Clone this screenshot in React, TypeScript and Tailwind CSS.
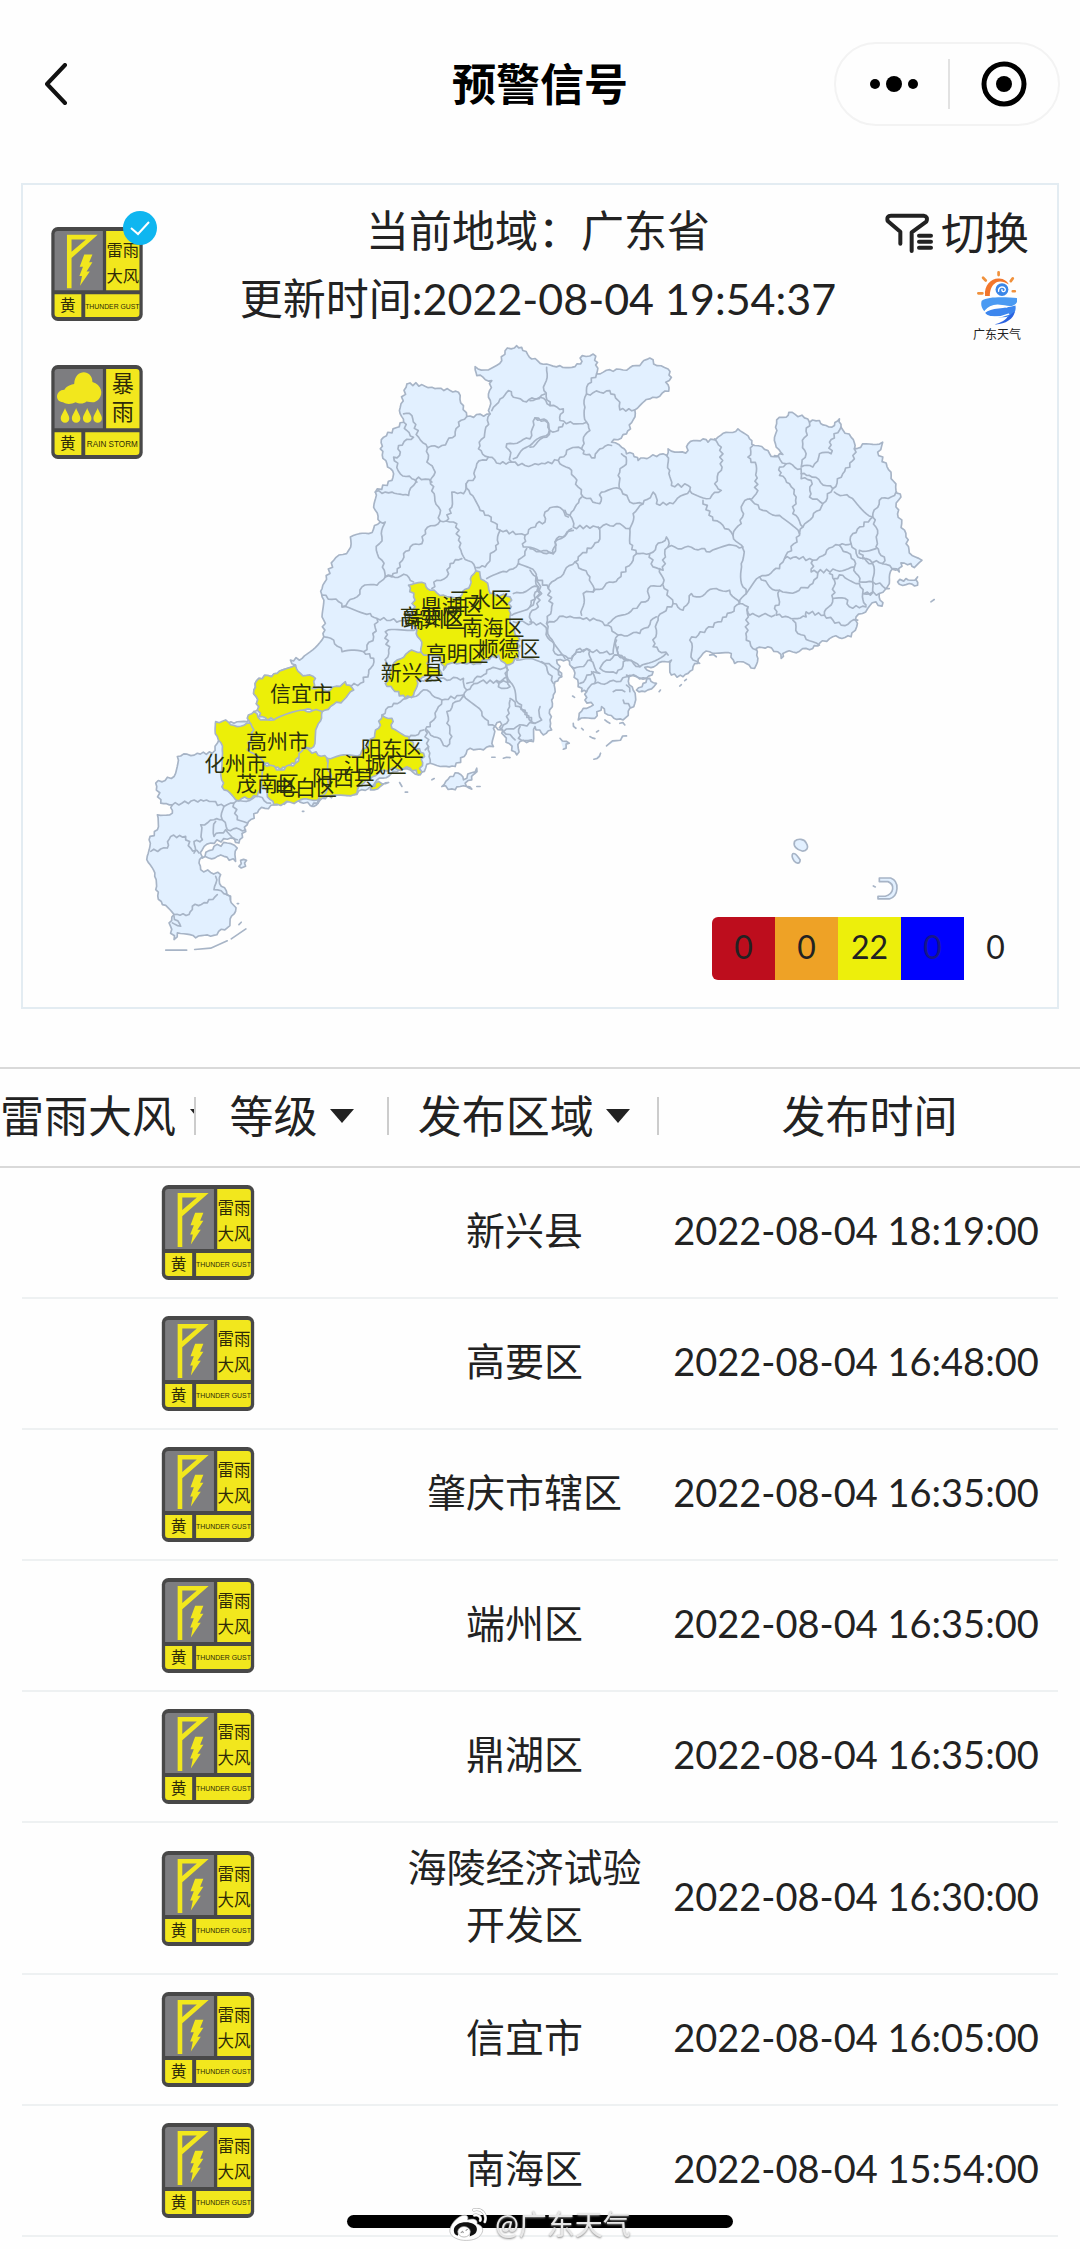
import React from 'react';

type Region = { name: string; x: number; y: number };
type Warning = { area: string; time: string };

const warnings: Warning[] = [
  { area: '新兴县', time: '2022-08-04 18:19:00' },
  { area: '高要区', time: '2022-08-04 16:48:00' },
  { area: '肇庆市辖区', time: '2022-08-04 16:35:00' },
  { area: '端州区', time: '2022-08-04 16:35:00' },
  { area: '鼎湖区', time: '2022-08-04 16:35:00' },
  { area: '海陵经济试验开发区', time: '2022-08-04 16:30:00' },
  { area: '信宜市', time: '2022-08-04 16:05:00' },
  { area: '南海区', time: '2022-08-04 15:54:00' },
];

const levels = [
  { label: '红色', count: 0, style: 'bg-[#bd0d1d] rounded-l-md' },
  { label: '橙色', count: 0, style: 'bg-[#eea226]' },
  { label: '黄色', count: 22, style: 'bg-[#edef0b]' },
  { label: '蓝色', count: 0, style: 'bg-[#0000fe] text-[#17178a]' },
  { label: '白色', count: 0, style: 'bg-[#fefefe]' },
];

const labels: Region[] = [
  { name: '三水区', x: 480, y: 599 },
  { name: '鼎湖区', x: 452, y: 606 },
  { name: '高要区', x: 431, y: 616 },
  { name: '端州区', x: 434, y: 619 },
  { name: '南海区', x: 493, y: 627 },
  { name: '高明区', x: 457, y: 653 },
  { name: '顺德区', x: 509, y: 648 },
  { name: '新兴县', x: 412, y: 672 },
  { name: '信宜市', x: 301, y: 693 },
  { name: '高州市', x: 277, y: 741 },
  { name: '阳东区', x: 392, y: 748 },
  { name: '江城区', x: 375, y: 764 },
  { name: '化州市', x: 235, y: 763 },
  { name: '阳西县', x: 343, y: 777 },
  { name: '茂南区', x: 267, y: 783 },
  { name: '电白区', x: 305, y: 787 },
];

const coast =
  '830,160 875,162 905,170 960,180 985,185 1000,225 1010,258 1080,250 1075,190 1085,150 1040,135 1035,108 1065,118 1115,90 1125,60 1160,45 1175,50 1205,85 1250,100 1290,105 1335,108 1352,100 1357,75 1390,70 1403,95 1400,130 1440,117 1480,118 1530,105 1560,82 1582,105 1615,115 1625,140 1608,155 1617,182 1560,205 1515,238 1510,268 1490,310 1445,335 1475,350 1490,370 1510,370 1525,390 1560,380 1600,370 1612,375 1615,355 1668,368 1675,340 1720,325 1735,335 1765,320 1825,295 1860,325 1875,345 1915,360 1925,378 1960,372 1940,350 1938,290 1950,260 1970,260 1978,245 2025,262 2040,275 2070,270 2090,285 2115,285 2130,265 2135,290 2165,320 2175,355 2210,340 2260,335 2245,365 2285,425 2300,480 2315,500 2300,530 2330,620 2340,668 2378,690 2355,712 2345,700 2315,698 2310,725 2290,715 2280,760 2250,790 2258,828 2240,815 2215,835 2180,860 2182,890 2165,920 2110,920 2070,940 2050,955 1960,970 1955,985 1945,965 1915,950 1880,955 1885,985 1875,1015 1850,1000 1815,1000 1805,970 1740,965 1720,970 1705,1000 1690,1010 1675,1030 1660,1040 1625,1035 1625,990 1580,1005 1545,1012 1570,1025 1550,1045 1490,1035 1510,1080 1515,1120 1480,1170 1435,1155 1415,1130 1395,1165 1345,1170 1360,1135 1390,1125 1365,1110 1370,1085 1355,1085 1345,1060 1325,1010 1312,988 1280,990 1295,1040 1275,1055 1270,1095 1265,1110 1260,1170 1265,1200 1240,1215 1215,1190 1210,1235 1170,1235 1160,1275 1115,1210 1110,1175 1090,1195 1090,1250 1060,1260 1020,1255 975,1310 930,1310 900,1300 865,1335 840,1320 800,1325 740,1350 720,1370 670,1395 620,1395 575,1405 550,1430 500,1410 440,1425 385,1440 350,1485 325,1540 300,1525 240,1540 215,1560 205,1600 210,1620 270,1635 272,1670 300,1700 315,1745 290,1795 240,1820 195,1825 140,1810 130,1830 115,1780 130,1755 95,1725 75,1680 72,1640 48,1590 55,1530 80,1500 80,1455 125,1450 125,1425 90,1420 75,1360 130,1340 140,1280 200,1270 245,1270 260,1240 270,1200 255,1180 310,1180 350,1175 370,1145 385,1130 370,1080 385,1045 440,1030 495,1005 480,990 515,985 580,920 580,870 575,800 575,775 610,690 655,660 660,620 715,610 750,575 735,540 735,485 785,450 790,430 770,400 750,355 760,320 820,275 810,230 830,160';

const northWest = [
  '820,250 845,255 865,320 892,352 935,345 975,315 985,275 1010,258',
  '892,352 890,395 915,425 900,450 912,490 925,530 930,572',
  '820,275 830,300 850,320 805,345 808,375 790,380 810,430 845,445 860,455',
  '735,485 765,485 785,485 800,490 835,495 850,465 865,440 905,455',
  '1080,250 1065,300 1045,355 1075,380 1110,400 1145,395 1130,340 1200,325 1215,262 1250,270 1255,310 1200,345 1150,385',
  '1085,240 1110,205 1135,180 1150,200 1180,212 1215,205 1245,190',
  '1145,395 1185,405 1215,400 1245,400 1285,390',
  '1075,380 1040,400 1035,440 1008,460 1020,490 1050,540 1075,555 1110,600 1105,640 1080,680 1065,710 1040,712',
  '1008,460 1000,490 965,485 965,530 948,572 930,572',
  '948,572 980,580 985,630 995,670 1035,712',
  '930,572 885,600 875,640 840,650 820,670 810,710 785,740 765,740 755,690 738,660 755,620 765,575 750,575',
  '765,740 740,765 695,770 680,800 635,830 625,815 575,795',
  '635,830 720,850 740,865 730,920 700,965 635,965 610,930 580,920',
  '740,865 830,875 860,880',
  '765,740 830,735 850,755',
  '905,775 920,750 950,740 960,700 995,685',
  '1110,600 1185,615 1220,580 1245,575 1245,545 1270,530 1300,540 1315,560',
  '1185,615 1180,650 1250,670 1270,670 1275,635 1325,595',
  '1190,655 1165,700 1130,725 1070,745',
  '1165,700 1215,725 1225,770 1150,790',
  '1225,770 1200,830 1145,855',
  '1150,875 1205,880 1200,850 1225,830 1225,770',
  '700,965 730,985 715,1030 690,1060 645,1070',
  '860,895 765,905 775,960 765,1010 800,1010',
];

const east = [
  '50,110 42,180 60,225 100,235 90,270 130,280 170,275',
  '0,210 30,200 60,225',
  '100,280 85,300 60,300 45,270 15,262',
  '60,300 50,320 0,350',
  '200,130 175,160 170,190 165,230 170,275 180,300 160,330 155,355 160,370 195,382 210,355 245,345',
  '170,190 240,180 270,215 270,238 315,238',
  '155,355 120,355 85,390 125,420 145,470 160,500 210,520 215,485 270,475',
  '275,370 290,390 265,435 275,480 300,515 340,520 370,485 380,520 430,520 480,480',
  '410,375 420,420 425,465 475,465 480,480 530,505 575,480 555,460 575,420 575,350 555,325',
  '520,510 550,570 580,585 610,615',
  '670,345 655,380 680,405 680,490 640,520 635,580 610,615 640,655 635,700 640,770 650,790',
  '660,505 700,540 750,555 810,610',
  '735,375 770,400 750,410 750,435 780,460 800,500 790,550 820,590 810,615 765,685 750,715 690,740 650,790',
  '770,400 815,415 815,445 845,450 840,500 880,520 850,560 820,590',
  '840,275 820,340 830,370 815,410 850,410 870,370 905,370 900,335 935,290',
  '815,430 840,435 910,475 880,520',
  '910,475 940,430 975,385 975,355',
  '915,485 960,500 1030,560 1050,510 1085,500 1100,485',
  '1030,560 970,610 965,640 930,645 910,650 870,680 850,690 800,680 765,685',
  '1030,560 1045,610 1040,650 1065,680 1060,700 1100,720',
  '1040,655 990,660 1000,685 1060,700',
  '930,645 975,690 975,710 920,720 845,725 850,690',
  '690,740 720,770 750,780 800,785 850,760 865,730',
  '750,780 750,815 735,835 740,855 795,865 830,860 830,845 885,855 910,805 915,750 900,730',
  '735,855 660,855 655,830 630,820 650,790',
  '790,870 805,910 850,935 870,945',
  '885,855 935,885 985,870',
  '910,805 955,810 960,830 1010,830',
  '915,745 940,735 990,760 1000,790 1010,825',
  '975,710 990,755 1030,755 1030,785 1000,790',
  '965,640 985,680 1030,700 1030,755 1080,775',
  '1005,790 1050,790',
  '155,500 120,555 130,590 200,590 270,580 300,595 310,550 340,520',
  '120,555 105,540',
  '300,595 300,640 320,670 360,670 410,620 415,650 525,655 540,665 610,645 640,650',
  '205,590 205,635 145,680 135,695 75,750 55,775 65,830 50,880',
  '0,655 70,670 80,625 130,600',
  '135,695 180,740 190,785 265,745 310,690 320,670',
  '190,785 160,790 155,855',
  '360,670 370,710 400,720 405,670 415,650',
  '390,715 400,760 355,775 355,810 310,835 235,880',
  '400,765 430,820 460,840 485,790 500,800 560,775 600,780 630,820',
  '430,820 385,860 380,900 370,950 415,975',
  '50,880 100,858 200,870 235,885 265,915 330,910 380,860',
  '50,880 75,970 115,985 160,960 250,970 265,915',
  '265,950 270,980 330,1010',
  '630,820 590,860 480,930 490,990 510,1000',
  '655,830 650,930 680,960',
  '0,720 20,740 55,775',
  '20,740 35,790 0,830',
  '0,875 40,885 60,930 105,985',
];

const southWest = [
  '870,120 1000,115 1010,150 1050,125 1140,125 1130,80',
  '755,225 790,190 830,175 890,150 935,180 920,210 900,260 885,270 895,320 885,330',
  '835,295 880,270',
  '895,320 900,370',
  '935,180 1000,165 1055,215 1075,255 1115,270',
  '1000,165 950,215 950,250 965,290 950,320 890,270',
  '1140,125 1165,190 1205,245',
  '1140,180 1130,250 1115,265',
  '1130,80 1070,90 1060,105 1010,130',
  '1010,150 1000,170',
  '125,495 210,480 245,485 280,500 310,490 385,470 420,490',
  '280,500 275,540 290,570 345,570',
  '215,600 210,555 250,540 275,540',
  '255,545 250,590 285,570 320,600',
  '60,635 110,625 120,590 165,590 180,625 205,640',
  '190,640 190,605 215,600',
  '310,490 320,540 350,550',
  '130,825 175,825 185,800 230,790 260,765',
  '255,710 250,750 290,765 300,780',
  '130,830 150,860 125,850',
];

const delta = [
  '50,125 80,110 90,140 55,140 50,125',
  '80,70 80,110',
  '90,175 130,215 165,250',
  '110,60 150,55 200,80 220,130',
  '185,65 225,85 245,110',
  '275,60 290,30 330,30 335,60 300,80 275,80',
  '330,60 360,100 340,95 300,130',
  '360,85 410,100 440,60 415,45 380,60 360,85',
  '320,155 345,130 410,125 440,110 500,115',
  '335,95 345,130',
  '415,45 480,80 560,40',
  '410,0 415,45',
  '105,300 70,275 110,260 160,250',
  '120,260 115,295 155,300',
  '180,200 185,240 165,250',
];

const alertAreas = [
  '385,1045 440,1030 495,1005 510,1030 555,1045 545,1075 600,1080 645,1055 670,1080 640,1110 600,1130 575,1145 520,1140 430,1170 385,1160 385,1130 370,1080 385,1045',
  '370,1145 390,1170 430,1170 520,1140 575,1145 560,1190 550,1250 520,1255 495,1300 450,1320 400,1300 350,1260 360,1200 350,1165 370,1145',
  '255,1175 285,1170 320,1190 360,1180 370,1200 350,1260 400,1300 400,1370 380,1400 315,1410 280,1380 270,1330 275,1260 260,1220 255,1175',
  '400,1300 450,1320 495,1300 520,1255 590,1285 600,1330 600,1400 500,1415 430,1425 410,1390 395,1370 400,1300',
  '590,1285 690,1275 745,1195 755,1155 785,1165 785,1195 835,1220 850,1250 880,1270 870,1335 840,1315 760,1320 700,1360 670,1395 575,1405 545,1430 590,1380 600,1330 590,1285',
  '720,1380 735,1360 775,1358 750,1370 720,1380',
  '800,990 835,965 900,960 890,1000 935,1030 860,1050 850,1095 825,1105 765,1060 800,990',
  '835,765 885,760 900,780 940,795 990,800 1020,765 1035,712 1050,735 1075,770 1080,790 1140,800 1140,880 1165,920 1165,985 1130,1005 1105,975 1040,1000 960,1000 940,1020 930,980 880,975 860,900 830,870 850,850 850,800 835,765',
];

const islands = [
  '2305,755 2330,745 2345,750 2365,740 2365,765 2340,760 2310,762 2305,755',
  '2405,815 2415,808',
  '215,1585 250,1550 290,1540 320,1555 315,1595 280,1580 215,1585',
  '325,1610 330,1592 348,1592 345,1610 332,1615 325,1610',
  '935,1370 960,1340 985,1330 1000,1350 1040,1315 1025,1350 1005,1360 1025,1378 990,1370 975,1380 935,1370',
  '1040,1370 1050,1370',
  '1085,1282 1095,1282',
  '1120,1285 1140,1283',
  '905,1350 912,1346',
  '808,1358 815,1370',
  '825,1387 832,1387',
  '516,1445 520,1445',
  '325,1785 332,1778',
  '320,1722 324,1722',
  '1430,1248 1460,1232 1490,1218',
  '1392,1288 1412,1270',
  '1290,1225 1318,1240 1300,1258',
  '1330,1180 1338,1195',
  '1380,1220 1395,1226',
  '1400,1206 1406,1202',
  '1540,1060 1520,1080 1545,1085 1580,1060 1560,1045 1540,1060',
  '1588,1085 1592,1080',
  '1650,1068 1655,1064',
  '1665,1052 1670,1048',
  '1328,1098 1334,1102',
  '1355,1195 1360,1200',
  '1425,1170 1440,1180',
  '1470,1180 1485,1185',
  '1450,1085 1485,1085',
  '1480,1110 1500,1130',
  '1490,1065 1500,1085',
  '1740,975 1760,980',
];

// Break every segment into short steps so that borders look surveyed, not ruled
const roughen = (points: string, dx = 0, dy = 0) => {
  const pts = points.split(' ').map((p) => p.split(',').map(Number));
  let d = `M${pts[0][0] + dx} ${pts[0][1] + dy}`;
  for (let i = 1; i < pts.length; i++) {
    const [x1, y1] = pts[i - 1];
    const [x2, y2] = pts[i];
    const len = Math.hypot(x2 - x1, y2 - y1);
    const steps = Math.max(1, Math.round(len / 10));
    for (let s = 1; s <= steps; s++) {
      const t = s / steps;
      const x = x1 + (x2 - x1) * t + dx;
      const y = y1 + (y2 - y1) * t + dy;
      const n = s === steps ? 0 : Math.sin(x * 12.9 + y * 78.2) * 5;
      d += `L${(x - ((y2 - y1) / len) * n).toFixed(1)} ${(y + ((x2 - x1) / len) * n).toFixed(1)}`;
    }
  }
  return d;
};

const ProvinceMap: React.FC = () => (
  <svg viewBox="22 184 1036 824" className="block w-full h-auto [grid-area:1/1]" role="img" aria-label="广东省预警地图">
    <g transform="translate(130 330) scale(.33333)" fill="none" stroke="#a7b4c6" strokeWidth="5" strokeLinejoin="round" strokeLinecap="round">
      <path d={roughen(coast)} fill="#e2f0ff" />
      {islands.map((p) => <path key={p} d={roughen(p)} fill="#e2f0ff" />)}
      {northWest.map((p) => <path key={p} d={roughen(p)} />)}
      {east.map((p) => <path key={p} d={roughen(p, 1200, 0)} />)}
      {southWest.map((p) => <path key={p} d={roughen(p, 0, 930)} />)}
      {delta.map((p) => <path key={p} d={roughen(p, 1050, 930)} />)}
      {alertAreas.map((p) => <path key={p} d={roughen(p)} fill="#ecef08" />)}
      <path d="M105 1862H168M192 1860L240 1856L290 1834M302 1828L346 1798" />
      {/* Dongsha and outer reefs */}
      <g fill="#e2f0ff">
        <path d="M1995 1535C2005 1525 2025 1527 2030 1540C2040 1555 2030 1565 2018 1564C2003 1560 1990 1550 1995 1535Z" />
        <path d="M1990 1572C1998 1568 2004 1580 2012 1590C2012 1604 2000 1602 1994 1594C1988 1585 1986 1577 1990 1572Z" />
        <path d="M2250 1645H2284C2312 1655 2308 1700 2280 1708H2246V1700H2268C2294 1692 2298 1665 2276 1656H2250Z" />
      </g>
      <path d="M2232 1669L2238 1672" />
    </g>
    <g fontSize="21" fill="#2a2f0c" textAnchor="middle">
      {labels.map((l) => <text key={l.name} x={l.x} y={l.y + 8}>{l.name}</text>)}
    </g>
  </svg>
);

const WarningIcon: React.FC<{ kind: 'gust' | 'rain'; className: string }> = ({ kind, className }) => (
  <svg viewBox="0 0 280 288" className={className} role="img" aria-label={kind === 'gust' ? '雷雨大风黄色预警' : '暴雨黄色预警'}>
    <rect width="280" height="288" rx="20" fill="#484848" />
    <path d="M10 22Q10 12 20 12H158V194H10Z" fill="#7d7d80" />
    <path d="M168 12H260Q270 12 270 22V194H168ZM10 206H92V276H20Q10 276 10 266ZM104 206H270V266Q270 276 260 276H104Z" fill="#f2e71d" />
    {kind === 'gust' ? (
      <g fill="#f2e71d">
        <path fillRule="evenodd" d="M48 24H142L62 95V188H48ZM62 38V76L106 38Z" />
        <path d="M101 84H126L116 108H126L108 136H118L88 180L94 150H86L97 122H87Z" />
      </g>
    ) : (
      <g fill="#f2e71d">
        <path d="M36 114C10 114 12 76 40 76C48 62 62 60 70 58C72 10 126 12 126 52C154 60 160 88 146 104C134 118 124 114 108 112C96 122 84 118 74 114C62 120 48 122 36 114Z" />
        {[42, 76, 110, 142].map((x) => (
          <path key={x} d={`M${x} 132C${x - 5} 146 ${x - 13} 154 ${x - 13} 164A13 13 0 0 0 ${x + 13} 164C${x + 13} 154 ${x + 5} 146 ${x} 132Z`} />
        ))}
      </g>
    )}
    <g fill="#2e2a08" textAnchor="middle">
      {kind === 'gust' ? (
        <>
          <text x="219" y="88" fontSize="50">雷雨</text>
          <text x="219" y="168" fontSize="50">大风</text>
        </>
      ) : (
        <>
          <text x="219" y="84" fontSize="68">暴</text>
          <text x="219" y="168" fontSize="68">雨</text>
        </>
      )}
      <text x="51" y="258" fontSize="48">黄</text>
      <text x="187" y="250" fontSize={kind === 'gust' ? 21 : 25} className="font-['Liberation_Sans',sans-serif]">
        {kind === 'gust' ? 'THUNDER GUST' : 'RAIN STORM'}
      </text>
    </g>
  </svg>
);

const WeatherLogo: React.FC = () => (
  <svg viewBox="0 0 120 160" className="h-[54px]" aria-hidden="true">
    <path d="M24 74C20 40 44 20 66 22C80 23 90 30 94 40C78 30 62 28 52 38C42 46 38 60 38 74Z" fill="#f2762c" />
    <g stroke="#f0913c" strokeWidth="8" strokeLinecap="round">
      <path d="M64 4V12M18 20L26 28M4 66H16M106 22L100 30M112 60H106" />
    </g>
    <circle cx="74" cy="55" r="19" fill="#3a86e8" />
    <path d="M64 60C62 44 84 44 84 56C82 64 72 62 74 55" fill="none" stroke="#fff" strokeWidth="4" strokeLinecap="round" />
    <path d="M14 88C34 74 90 78 118 80C124 92 112 104 96 104C70 100 38 98 22 120C10 106 12 94 14 88Z" fill="#4a9af2" />
    <path d="M24 124C40 108 84 112 114 102C118 124 104 134 86 136C66 138 34 138 24 124Z" fill="#3c86ee" />
    <path d="M112 120C110 142 80 160 52 158C72 152 84 146 90 136Z" fill="#2a62e0" />
    <path d="M24 120C38 100 62 98 88 106" stroke="#fff" strokeWidth="5" fill="none" strokeLinecap="round" />
    <path d="M28 134C50 138 72 138 94 128" stroke="#fff" strokeWidth="4" fill="none" strokeLinecap="round" />
  </svg>
);

const Caret: React.FC = () => (
  <svg viewBox="0 0 24 14" className="w-6 h-[14px] shrink-0" aria-hidden="true">
    <path d="M0 0H24L12 14Z" fill="#222" />
  </svg>
);

const FilterSelect: React.FC<{ label: string; value: string; className: string }> = ({ label, value, className }) => (
  <div className={`flex items-center overflow-hidden ${className}`}>
    <select aria-label={label} defaultValue={value} className="appearance-none bg-transparent shrink-0 outline-none">
      <option value={value}>{value}</option>
    </select>
    <Caret />
  </div>
);

const App: React.FC = () => {
  return (
    <main className="min-h-screen bg-[#fefefe] text-[#222] font-['Lato','Noto_Sans_CJK_SC',sans-serif]">
      {/* Navigation bar */}
      <header className="grid grid-cols-[1fr_auto_1fr] items-center pt-[42px] pb-[57px] px-5">
        <button aria-label="返回" className="justify-self-start px-6">
          <svg viewBox="0 0 24 42" className="w-6 h-[42px]" fill="none" stroke="#111" strokeWidth="4" strokeLinecap="round" strokeLinejoin="round">
            <path d="M21 2L3 21L21 40" />
          </svg>
        </button>
        <h1 className="text-[44px] leading-[56px] font-bold text-black">预警信号</h1>
        <div className="justify-self-end flex items-center w-[226px] h-[84px] rounded-full border-2 border-[#f3f3f3]">
          <button aria-label="更多" className="flex-1 flex justify-center pl-1">
            <svg viewBox="0 0 50 18" className="w-[50px] h-[18px]" fill="#000">
              <circle cx="6" cy="9" r="5" /><circle cx="25" cy="9" r="8" /><circle cx="44" cy="9" r="5" />
            </svg>
          </button>
          <span className="w-[2px] h-[50px] bg-[#e2e2e2]" />
          <button aria-label="关闭" className="flex-1 flex justify-center">
            <svg viewBox="0 0 46 46" className="w-[46px] h-[46px]">
              <circle cx="23" cy="23" r="20" fill="none" stroke="#000" strokeWidth="5" /><circle cx="23" cy="23" r="8" />
            </svg>
          </button>
        </div>
      </header>

      {/* Map card */}
      <section className="mx-[21px] grid border-2 border-[#e3ecf2]">
        <ProvinceMap />
        <div className="[grid-area:1/1] grid grid-cols-[120px_1fr_auto] items-start pt-3 px-[28px]">
          <div className="flex flex-col gap-11 pt-[30px]">
            <button className="relative w-[92px]">
              <WarningIcon kind="gust" className="w-[92px] h-[94px]" />
              <svg viewBox="0 0 34 34" className="absolute -top-4 -right-[14px] w-[34px] h-[34px]">
                <circle cx="17" cy="17" r="17" fill="#0fb6f0" />
                <path d="M8 17L15 23L26 11" fill="none" stroke="#fff" strokeWidth="2" />
              </svg>
            </button>
            <button className="w-[92px]">
              <WarningIcon kind="rain" className="w-[92px] h-[94px]" />
            </button>
          </div>
          <div className="text-center text-[43px] leading-[68px] whitespace-nowrap -mr-5">
            <p>当前地域：广东省</p>
            <p>更新时间:2022-08-04 19:54:37</p>
          </div>
          <div className="flex flex-col items-end pt-2">
            <button className="flex items-center gap-2 text-[44px] leading-[56px]">
              <svg viewBox="0 0 144 120" className="w-12 h-10" fill="none" stroke="#222" strokeWidth="12" strokeLinecap="round" strokeLinejoin="round">
                <path d="M46 92V56L8 24Q4 8 18 8H116Q130 10 124 26L80 58V114M102 68H138M102 86H138M102 104H138" />
              </svg>
              切换
            </button>
            <div className="flex flex-col items-center mr-2 pt-[10px]">
              <WeatherLogo />
              <span className="text-xs leading-5">广东天气</span>
            </div>
          </div>
        </div>
        <ul className="[grid-area:1/1] self-end justify-self-end flex mb-[27px] mr-[30px]">
          {levels.map((l) => (
            <li key={l.label} aria-label={l.label} className={`w-[63px] h-[63px] flex items-center justify-center pb-1 text-[32px] ${l.style}`}>
              {l.count}
            </li>
          ))}
        </ul>
      </section>

      {/* Filters */}
      <div className="mt-[58px] grid grid-cols-[18fr_18fr_25fr_39fr] items-center h-[101px] pb-1 border-y-2 border-[#d9d9d9] text-[44px] leading-[60px]">
        <FilterSelect label="预警类型" value="雷雨大风" className="gap-[14px]" />
        <FilterSelect label="等级" value="等级" className="gap-3 justify-center bg-[linear-gradient(#ccc,#ccc),linear-gradient(#ccc,#ccc)] bg-[length:2px_38px] bg-[position:left_center,right_center] bg-no-repeat" />
        <FilterSelect label="发布区域" value="发布区域" className="gap-3 justify-center bg-[linear-gradient(#ccc,#ccc)] bg-[length:2px_38px] bg-[position:right_center] bg-no-repeat" />
        <div className="text-center">发布时间</div>
      </div>

      {/* Warning list */}
      <div className="px-[22px]">
        <table className="w-full table-fixed border-collapse leading-[57px]">
          <colgroup>
            <col className="w-[36%]" />
            <col className="w-[25%]" />
            <col className="w-[39%]" />
          </colgroup>
          <tbody>
            {warnings.map((w) => (
              <tr key={w.area} className="border-b-2 border-[#eef1f2]">
                <td className="py-[17px]">
                  <WarningIcon kind="gust" className="mx-auto w-[94px] h-[95px]" />
                </td>
                <td className="text-center text-[39px] px-2 pt-4 pb-5">{w.area}</td>
                <td className="text-center text-[38px] whitespace-nowrap pb-1">{w.time}</td>
              </tr>
            ))}
          </tbody>
        </table>
      </div>

      {/* Home indicator and watermark */}
      <div className="fixed bottom-0 inset-x-0 flex justify-center pb-[21px]">
        <div className="w-[386px] h-[13px] rounded-full bg-black" />
      </div>
      <div className="fixed bottom-[6px] inset-x-0 flex items-center justify-center gap-2 text-[28px] leading-[38px] text-[#e8e8e8] [text-shadow:0_1px_2px_#888]">
        <svg viewBox="0 0 114 100" className="w-[38px] h-[33px]">
          <path d="M2 66C6 44 30 22 46 22C56 22 58 28 56 36C74 30 88 36 84 48C100 54 106 64 98 78C88 96 64 99 44 98C20 96 0 84 2 66Z" fill="#fff" stroke="#aaa" strokeWidth="2" />
          <path fillRule="evenodd" d="M14 68C14 36 84 36 84 64C84 80 70 84 62 86C70 62 30 56 26 84C18 82 14 76 14 68Z" fill="#111" />
          <ellipse cx="45" cy="72" rx="19" ry="16" fill="#fff" stroke="#999" strokeWidth="2" />
          <path d="M36 76C38 68 44 70 42 76M50 68L56 65" fill="none" stroke="#777" strokeWidth="3" />
          <path d="M74 6C98 0 116 18 108 42M76 22C88 18 98 28 94 38" fill="none" stroke="#aaa" strokeWidth="9" strokeLinecap="round" />
          <path d="M74 6C98 0 116 18 108 42M76 22C88 18 98 28 94 38" fill="none" stroke="#fff" strokeWidth="6" strokeLinecap="round" />
        </svg>
        <span>@广东天气</span>
      </div>
    </main>
  );
};

export default App;
